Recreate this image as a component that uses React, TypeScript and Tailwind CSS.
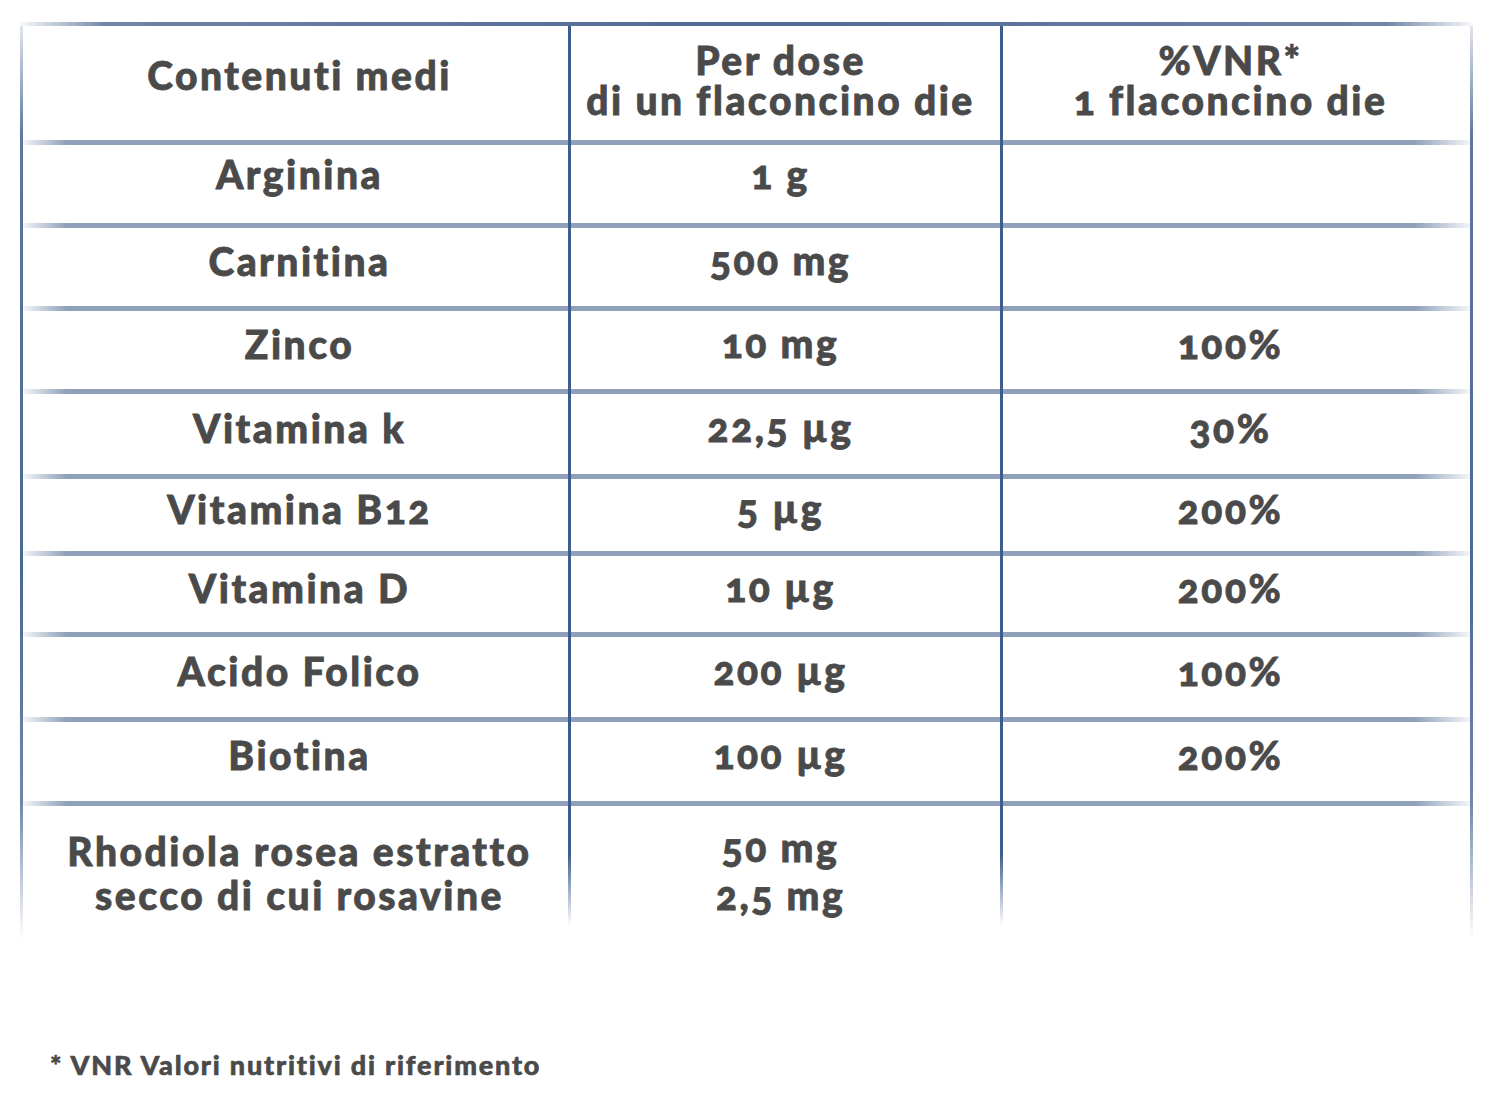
const rows: { name: string; dose: string; vnr: string; h: string }[] = [
  { name: "Arginina", dose: "1 g", vnr: "", h: "h-[78px]" },
  { name: "Carnitina", dose: "500 mg", vnr: "", h: "h-[78px]" },
  { name: "Zinco", dose: "10 mg", vnr: "100%", h: "h-[78px]" },
  { name: "Vitamina k", dose: "22,5 µg", vnr: "30%", h: "h-[80px]" },
  { name: "Vitamina B12", dose: "5 µg", vnr: "200%", h: "h-[72px]" },
  { name: "Vitamina D", dose: "10 µg", vnr: "200%", h: "h-[76px]" },
  { name: "Acido Folico", dose: "200 µg", vnr: "100%", h: "h-[80px]" },
  { name: "Biotina", dose: "100 µg", vnr: "200%", h: "h-[79px]" },
];

const cols = "grid grid-cols-[545px_432px_1fr]";
const divider = "border-l-[3px] border-solid border-[#3e5d8f]";

function Separator() {
  return (
    <div className={`${cols} h-[5px]`}>
      <div className="bg-[linear-gradient(to_right,rgba(143,160,186,0.1),#8fa0ba_8%)]" />
      <div className={`${divider} bg-[#8fa0ba]`} />
      <div className={`${divider} bg-[linear-gradient(to_right,#8fa0ba_88%,rgba(143,160,186,0.1))]`} />
    </div>
  );
}

export default function App() {
  return (
    <main
      className="min-h-[1112px] bg-white text-[#4a4a4a] font-black tracking-[2.5px] [-webkit-text-stroke:0.8px_#4a4a4a] [font-variant-numeric:oldstyle-nums]"
      style={{ fontFamily: "Lato, 'Open Sans', sans-serif" }}
    >
      <div className="w-[1453px] pl-[20px] pt-[22px] box-content">
        <div className="h-[4px] bg-[linear-gradient(to_right,rgba(111,132,166,0.05),#6f84a6_6%,#4f6a95_50%,#6f84a6_94%,rgba(111,132,166,0.05))]" />
        <div className="flex">
          <div className="w-[3px] bg-[linear-gradient(to_bottom,#e0e5ec,#5e789f_12%,#4a6896_60%,#6f87ab_85%,rgba(255,255,255,0))]" />

          <div className="flex-1 text-[39px]">
            <div className={`${cols} h-[114px] leading-[40px]`}>
              <div className="flex items-center justify-center pl-[8px] pb-[16px]">
                Contenuti medi
              </div>
              <div className={`${divider} flex flex-col items-center justify-center pr-[10px] pb-[6px]`}>
                <span>Per dose</span>
                <span>di un flaconcino die</span>
              </div>
              <div className={`${divider} flex flex-col items-center justify-center pr-[12px] pb-[6px]`}>
                <span>%VNR*</span>
                <span>1 flaconcino die</span>
              </div>
            </div>
            <Separator />

            {rows.map((r, i) => (
              <div key={r.name}>
                <div className={`${cols} ${r.h}`}>
                  <div className={`flex items-center justify-center pl-[8px] ${i === 0 ? "pb-[20px]" : "pb-[12px]"}`}>
                    {r.name}
                  </div>
                  <div className={`${divider} flex items-center justify-center pr-[10px] ${i === 0 ? "pb-[20px]" : "pb-[14px]"}`}>
                    {r.dose}
                  </div>
                  <div className={`${divider} flex items-center justify-center pr-[12px] pb-[12px]`}>
                    {r.vnr}
                  </div>
                </div>
                <Separator />
              </div>
            ))}

            <div className={`${cols} h-[134px]`}>
              <div className="flex flex-col items-center justify-start pt-[23px] pl-[8px] leading-[44px]">
                <span>Rhodiola rosea estratto</span>
                <span>secco di cui rosavine</span>
              </div>
              <div className="flex">
                <div className="w-[3px] h-[120px] bg-[linear-gradient(to_bottom,#3e5d8f_40%,rgba(255,255,255,0))]" />
                <div className="flex-1 flex flex-col items-center pt-[17px] pr-[10px] leading-[48px]">
                  <span>50 mg</span>
                  <span>2,5 mg</span>
                </div>
              </div>
              <div className="flex">
                <div className="w-[3px] h-[120px] bg-[linear-gradient(to_bottom,#3e5d8f_40%,rgba(255,255,255,0))]" />
              </div>
            </div>
          </div>

          <div className="w-[3px] bg-[linear-gradient(to_bottom,#e0e5ec,#5e789f_12%,#4a6896_60%,#6f87ab_85%,rgba(255,255,255,0))]" />
        </div>
      </div>

      <p className="mt-[105px] pl-[50px] text-[27px] tracking-[1.8px] [-webkit-text-stroke:0.6px_#4a4a4a]">
        * VNR Valori nutritivi di riferimento
      </p>
    </main>
  );
}
